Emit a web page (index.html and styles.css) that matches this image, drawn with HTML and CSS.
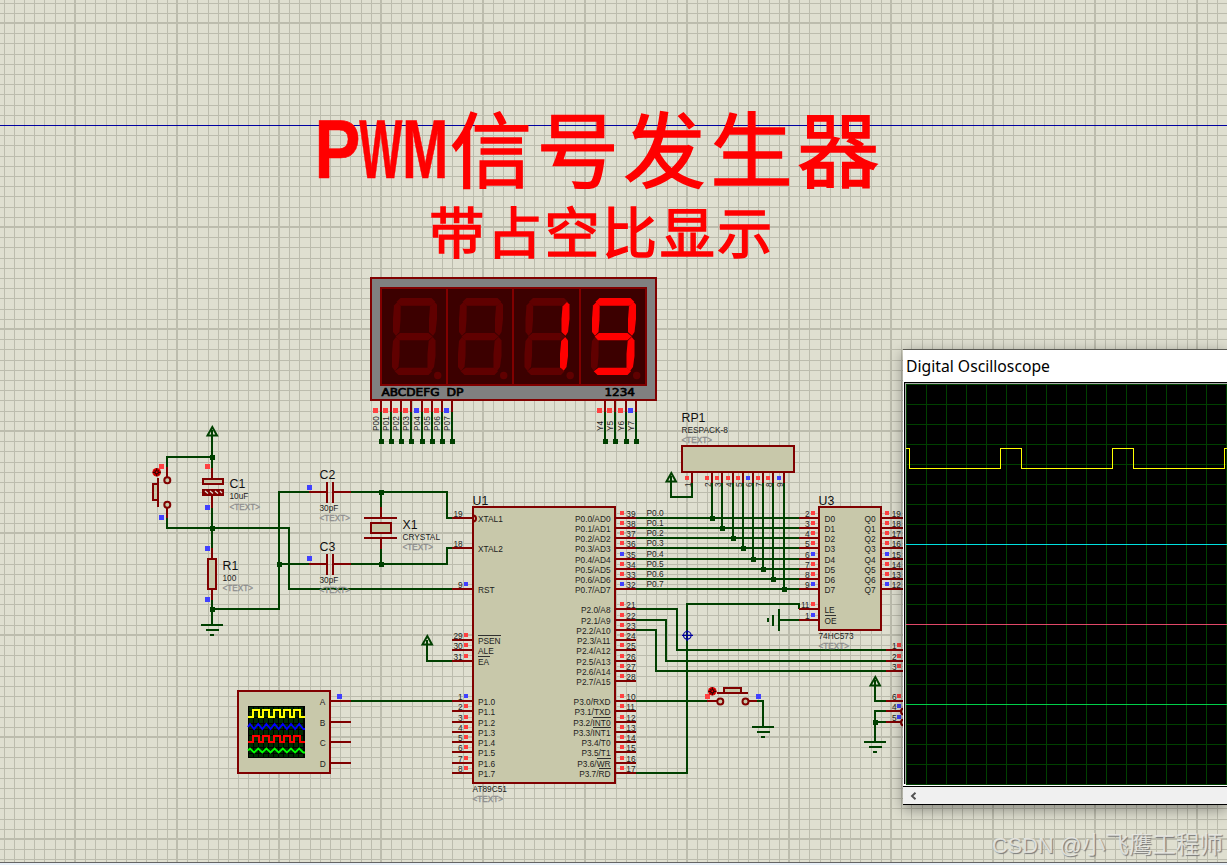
FILE: index.html
```html
<!DOCTYPE html>
<html lang="zh">
<head>
<meta charset="utf-8">
<title>PWM信号发生器</title>
<link rel="stylesheet" href="styles.css">
</head>
<body>
<main class="workspace">
  <svg class="schematic" id="schematic" width="1227" height="862" viewBox="0 0 1227 862"></svg>
  <section class="scope">
    <header class="scope-title"><span>Digital Oscilloscope</span></header>
    <div class="scope-body">
      <svg class="scope-screen" id="screen" width="321" height="401" viewBox="906 384 321 401"></svg>
    </div>
    <footer class="scope-scroll">
      <svg width="7" height="8" viewBox="0 0 7 8"><path d="M5.500 .8 2 4l3.500 3.200" fill="none" stroke="#505050" stroke-width="1.900"/></svg>
    </footer>
  </section>
  <p class="watermark">CSDN @<span>小飞鹰工程师</span></p>
</main>
<div class="status"></div>
<script src="schematic.js"></script>
</body>
</html>
```
FILE: styles.css
```css
html, body { margin: 0; height: 100%; overflow: hidden; }
body { display: flex; flex-direction: column; background: #dfdfd0; font-family: "Liberation Sans", sans-serif; }
.workspace { position: relative; flex: 1; min-height: 0; overflow: hidden; }
.schematic { display: block; }
.status { height: 2px; border-top: 1px solid #646464; background: #e8f0f8; }

.grid { fill: #bcbcad; }
.axis { fill: #0000a0; }
.wire { fill: none; stroke: #004000; stroke-width: 2; }
.pin { fill: none; stroke: #800000; stroke-width: 2; }
.part { fill: #c8c8aa; stroke: #800000; stroke-width: 2; }
.solid { fill: #800000; }
.dot { fill: #004000; }
.cell { fill: #002c00; }
.high { fill: #ff4040; }
.low { fill: #4040ff; }
.crisp { shape-rendering: crispEdges; }
.t { font-size: 8.300px; fill: #1c1c1c; }
.ref { font-size: 12.300px; fill: #101010; }
.hint { font-size: 8.200px; fill: #8e8e8e; stroke: #8e8e8e; stroke-width: .3; }
.over { stroke: #303030; stroke-width: 1; }
.case { fill: #808080; stroke: #800000; stroke-width: 2; }
.glass { fill: #3c0000; stroke: #800000; stroke-width: 2; }
.off { fill: #600000; }
.on { fill: #ff0000; }
.led-label { font: 9.800px "DejaVu Sans", sans-serif; fill: #000; stroke: #000; stroke-width: .6; }
.title { fill: #f00; stroke: #f00; font-family: "Noto Sans CJK SC", sans-serif; }
.title-main { font-size: 82px; stroke-width: 1.500; }
.title-sub { font-size: 55px; stroke-width: 1.500; }
.latin { font: bold 83px "Liberation Sans", sans-serif; fill: #f00; stroke: #f00; stroke-width: .6; }
.cross { fill: none; stroke: #0000a0; stroke-width: 1.200; }

.scope { position: absolute; left: 903px; top: 349px; width: 324px; height: 454px; display: flex; flex-direction: column; background: #fff; border-top: 1px solid #5c5c54; border-bottom: 1px solid #000; box-shadow: 0 4px 14px rgba(0,0,0,.42); }
.scope-title { height: 31px; padding: 0 0 1px 3px; flex: none; display: flex; align-items: center; font: 16px "Noto Sans", sans-serif; color: #000; white-space: nowrap; }
.scope-title span { display: block; transform: scaleX(.982); transform-origin: left; }
.scope-body { flex: none; height: 402px; margin-left: 1px; border-top: 1px solid #000; border-left: 1px solid #000; background: #a8a8a8; padding: 1px 0 0 1px; box-sizing: border-box; }
.scope-screen { display: block; background: #000; }
.scope-scroll { flex: 1; margin-top: 2px; border-top: 1px solid #000; display: flex; align-items: center; padding-left: 7px; background: #f0f0f0; }
.watermark { position: absolute; right: 4px; top: 829px; margin: 0; width: 231px; font: 21.800px/32px "Liberation Sans", "Noto Sans CJK SC", sans-serif; color: rgba(235,235,230,.85); text-shadow: 1px 1px 1px #777; white-space: nowrap; }
.watermark span { font-size: 23.500px; }
```
FILE: schematic.js
```js
const parts = [];
const add = s => parts.push(s);
const line = (cls, d) => add(`<path class="${cls} crisp" d="${d}"/>`);
const wire = d => line('wire', d);
const pin = d => line('pin', d);
const box = (cls, x, y, w, h) => add(`<rect class="${cls} crisp" x="${x}" y="${y}" width="${w}" height="${h}"/>`);
const text = (cls, x, y, s, extra = '') => add(`<text class="${cls}" x="${x}" y="${y}" ${extra}>${s}</text>`);
const dot = (x, y) => box('dot', x - 2, y - 2, 5, 5);
const level = (x, y, hi, w = 4) => box(hi ? 'high' : 'low', x, y, w, w);
const hint = (x, y) => text('hint', x, y, '&lt;TEXT&gt;');
const END = 'text-anchor="end"';

function grid() {
  for (let k = -28; k < 94; k++) {
    const x = Math.round(279 + 10.2 * k);
    k % 10 === 0 ? box('grid', x - 1, 0, 2, 862) : box('grid', x, 0, 1, 862);
  }
  for (let k = -12; k < 73; k++) {
    const y = Math.round(125 + 10.2 * k);
    if (k !== 0) k % 10 === 0 ? box('grid', 0, y - 1, 1227, 2) : box('grid', 0, y, 1227, 1);
  }
  box('axis', 0, 125, 1227, 1);
}

function power(x, y) {
  add(`<path d="M${x + .3} ${y + 1}L${x + 5} ${y + 9.5}H${x - 4.500}Z" fill="none" stroke="#004000" stroke-width="2"/>`);
}
function ground(x, y) {
  wire(`M${x - 11} ${y}h22M${x - 6} ${y + 5}h13M${x - 2} ${y + 10}h4`);
}
function ring(x, y) {
  add(`<circle cx="${x}" cy="${y}" r="3" class="part"/>`);
}
function actuator(x, y) {
  add(`<circle cx="${x}" cy="${y}" r="4.300" fill="#e00000"/><path d="M${x - 4} ${y}h8M${x} ${y - 4}v8M${x - 2} ${y - 2}l4 4M${x + 2} ${y - 2}l-4 4" stroke="#300" stroke-width="1.200"/><circle cx="${x}" cy="${y}" r="1" fill="#f00"/>`);
}

function titles() {
  add(`<g class="latin"><text transform="translate(314.400 178.300) scale(.83 1)">P</text><text transform="translate(359.300 178.300) scale(.55 1)">W</text><text transform="translate(402.200 178.300) scale(.665 1)">M</text></g>`);
  text('title title-main', '450 536.800 623.600 710.400 797.200', 181, '信号发生器');
  text('title title-sub', '429.300 486.900 544.500 602.100 659.700 717.300', 253, '带占空比显示');
}

function display() {
  box('case', 371, 278, 285, 122);
  box('glass', 381, 288, 265, 97);
  pin('M447 288V385M513 288V385M580 288V385');
  const seg = {
    a: '396.500,301.700 400.500,298 431.500,298 435.300,301.700 431,305.800 400.500,305.800',
    b: '434.500,302 437,304.500 437,319 435.500,332 433,335.800 429,332 429,319 430,306.500',
    c: '432.700,337 435.500,340.500 435.500,356 434,367 431,371 427.500,367.500 427.500,354 428.700,341',
    d: '394.700,371.300 399.500,367.700 428,367.700 432,371.300 428.500,375 398.500,375',
    e: '396,337 399.700,340.500 399.500,356 398.500,367 395,371 392,367 392,354 393,341',
    f: '397.500,302 400.700,306 400.500,320 399.500,332 396,335.800 393,332 393,319 394,305.500',
    g: '395.700,336.500 400,333 428.500,333 432.700,336.500 428.500,340.200 399,340.200'
  };
  [[0, ''], [66, ''], [132.5, 'bc'], [199, 'abcdfg']].forEach(([dx, lit]) => {
    for (const k in seg)
      add(`<polygon transform="translate(${dx} 0)" class="${lit.includes(k) ? 'on' : 'off'}" points="${seg[k]}"/>`);
    add(`<circle class="off" cx="${437.7 + dx}" cy="375.500" r="3.700"/>`);
  });
  text('led-label', 381.500, 396, 'ABCDEFG', 'textLength="58" lengthAdjust="spacingAndGlyphs"');
  text('led-label', 446.500, 396, 'DP', 'textLength="17" lengthAdjust="spacingAndGlyphs"');
  text('led-label', 604.500, 396, '1234', 'textLength="30.500" lengthAdjust="spacingAndGlyphs"');
  const leg = (x, name, hi) => {
    pin(`M${x} 401V412`); wire(`M${x} 412V441`); dot(x, 441);
    level(x - 8, 408, hi, 5);
    add(`<text class="t" transform="translate(${x - 2} 431) rotate(-90)">${name}</text>`);
  };
  [381, 391, 401, 411, 422, 432, 442, 452].forEach((x, i) => leg(x, 'P0' + i, i !== 4 && i !== 7));
  [605, 615, 626, 636].forEach((x, i) => leg(x, 'Y' + (i + 4), i < 3));
}

function resetCircuit() {
  power(212, 426);
  wire('M212 430V468M167 468V457H212M212 508V549M167 518V528H289V589H452M212 599V626M212 609H279V492H309M279 564H309');
  pin('M212 468V479M212 496V508M212 548V559M212 590V600M167 467V478M167 507V518');
  ring(167.300, 480.300); ring(167.300, 504.700);
  box('part', 153, 484, 5, 16); pin('M158 478V507');
  actuator(156.700, 472.300);
  box('part', 203, 479, 20, 5);
  box('solid', 202, 489, 22, 7);
  add('<path d="M205 491l3 2.500M210 491l3 2.500M215 491l3 2.500M220 491l2 2" stroke="#dfdfd0" stroke-width="1.300"/>');
  box('part', 208, 559, 8, 30);
  dot(212, 457); dot(212, 528); dot(212, 609);
  ground(212, 625);
  level(159, 464, 1, 5); level(159, 515, 0, 5); level(205, 464, 1, 5);
  level(205, 505, 0, 5); level(205, 546, 0, 5); level(205, 597, 0, 5);
  text('ref', 229.500, 487.700, 'C1'); text('t', 229.500, 499, '10uF'); hint(229.500, 510);
  text('ref', 222.500, 569.700, 'R1'); text('t', 222.500, 581, '100'); hint(222.500, 591);
}

function oscillator() {
  [[492, 'C2'], [564, 'C3']].forEach(([y, n]) => {
    pin(`M309 ${y}H327M333 ${y}H351M327 ${y - 10}v21M333 ${y - 10}v21`);
    level(307, n === 'C2' ? 485 : 556, 0, 5);
    text('ref', 319.500, y - 13.300, n); text('t', 319.500, y + 19.300, '30pF'); hint(319.500, y + 29);
  });
  wire('M351 492H447V518H452M351 564H447V548H452M381 492V507M381 549V564');
  pin('M452 518H473M452 548H473M452 589H473M381 507V518M364 518H397M364 538H397M381 538V549');
  box('part', 371, 523, 20, 10);
  dot(381, 492); dot(381, 564); dot(279, 564);
  text('ref', 402.500, 529, 'X1'); text('t', 402.500, 540.300, 'CRYSTAL'); hint(402.500, 550.300);
}

function mcu() {
  box('part', 473, 507, 142, 276);
  add('<path class="pin" d="M473 515.500a3 3 0 0 1 0 6"/>');
  text('ref', 472.500, 505, 'U1'); text('t', 472.500, 792.300, 'AT89C51'); hint(472.500, 802.300);
  const left = [[518, 19, 'XTAL1'], [548, 18, 'XTAL2'], [589, 9, 'RST', 0], [640, 29, 'PSEN', 1], [650, 30, 'ALE', 1], [661, 31, 'EA', 1]];
  [701, 711, 722, 732, 742, 752, 763, 773].forEach((y, i) => left.push([y, i + 1, 'P1.' + i, i ? 1 : 0]));
  left.forEach(([y, n, name, hi]) => {
    pin(`M452 ${y}H473`);
    text('t', 462.700, y - 1, n, END); text('t', 478, y + 4, name);
    if (hi !== undefined) level(464, y - 7, hi);
  });
  line('over', 'M478 635.500H501M478 656.500H490');
  const right = [];
  [518, 528, 538, 548, 559, 569, 579, 589].forEach((y, i) => {
    right.push([y, 39 - i, `P0.${i}/AD${i}`, i !== 4 && i !== 7]);
    wire(`M636 ${y}H799`); text('t', 646.500, y - 2, 'P0.' + i);
  });
  [609, 620, 630, 640, 650, 661, 671, 681].forEach((y, i) => right.push([y, 21 + i, `P2.${i}/A${8 + i}`, 1]));
  const alt = ['RXD', 'TXD', 'INT0', 'INT1', 'T0', 'T1', 'WR', 'RD'];
  [701, 711, 722, 732, 742, 752, 763, 773].forEach((y, i) => right.push([y, 10 + i, `P3.${i}/${alt[i]}`, 1]));
  right.forEach(([y, n, name, hi]) => {
    pin(`M615 ${y}H636`); level(620, y - 7, hi);
    text('t', 626.300, y - 1, n); text('t', 610.500, y + 4, name, END);
  });
  line('over', 'M593 717.500H611M593 727.500H611M597 758.500H611M599 768.500H611');
  power(427, 635); wire('M427 640V661H452');
  wire('M636 609H677V650H886M636 620H666V661H886M636 630H656V671H886M636 773H687V604H799V609');
  add('<g class="cross"><circle cx="687.300" cy="635.300" r="3.800"/><path d="M682 635.300h11M687.300 630v11"/></g>');
}

function respack() {
  box('part', 682, 446, 112, 26);
  text('ref', 681.500, 422, 'RP1'); text('t', 681.500, 433, 'RESPACK-8'); hint(681.500, 443);
  [692, 712, 722, 733, 743, 753, 763, 773, 784].forEach((x, i) => {
    pin(`M${x} 472V483`);
    level(x - 7, 476, i !== 5 && i !== 8);
    add(`<text class="t" transform="translate(${x - 1.500} 487) rotate(-90)">${i + 1}</text>`);
    if (i) {
      const y = [518, 528, 538, 548, 559, 569, 579, 589][i - 1];
      wire(`M${x} 483V${y}`); dot(x, y);
    }
  });
  wire('M692 483V497H671V476'); power(671, 472);
}

function latch() {
  box('part', 819, 507, 62, 123);
  text('ref', 818.500, 504.500, 'U3'); text('t', 818.500, 638.700, '74HC573'); hint(818.500, 648.700);
  [518, 528, 538, 548, 559, 569, 579, 589].forEach((y, i) => {
    const hi = i !== 4 && i !== 7;
    pin(`M799 ${y}H819M881 ${y}H903`);
    level(811, y - 7, hi); level(885, y - 7, hi);
    text('t', 809.500, y - 1, i + 2, END); text('t', 891.700, y - 1, 19 - i);
    text('t', 824.500, y + 4, 'D' + i); text('t', 875.500, y + 4, 'Q' + i, END);
  });
  pin('M799 609H819M799 620H819');
  text('t', 809.500, 608, '11', END); text('t', 809.500, 618.500, '1', END);
  level(811, 602, 1); level(811, 613, 0);
  text('t', 824.500, 613, 'LE'); text('t', 824.500, 624, 'OE');
  line('over', 'M825 615.500H836');
  wire('M799 620H779M779 609V631M773 615V626M768 618V622');
}

function outputs() {
  [[650, 1, 1], [661, 2, 1], [671, 3, 1], [701, 6, 1], [711, 4, 0], [722, 5, 0]].forEach(([y, n, hi]) => {
    pin(`M886 ${y}H903`); level(897, y - 7, hi); text('t', 896.500, y - 1, n, END);
  });
  wire('M875 680V701H886M886 711H875V742M875 722H886');
  power(875, 676); dot(875, 722); ground(875, 742);
  ring(904, 711.500); ring(904, 722.500);
}

function startButton() {
  wire('M636 701H707M757 701H763V727'); pin('M707 701H717M748 701H757M717 693H748');
  box('part', 724, 688, 17, 5);
  ring(720.300, 701.500); ring(745.500, 701.500);
  level(705, 694, 1, 5); level(756, 694, 0, 5);
  actuator(712.300, 691.300); ground(763, 727);
}

function probe() {
  box('part', 238, 691, 92, 82);
  box('', 248, 706, 57, 52);
  for (let x = 249; x < 304; x += 5) box('cell', x, 707, 4, 50);
  for (let y = 711; y < 757; y += 6) box('', 248, y, 57, 1);
  const up = [253, 263, 274, 284, 294];
  const square = (hi, lo, c) => {
    let d = `M248 ${lo}`;
    up.forEach(x => d += `H${x}V${hi}H${x + 5.500}V${lo}`);
    add(`<path d="${d}H305" class="crisp" fill="none" stroke="${c}" stroke-width="2"/>`);
  };
  const zig = (hi, lo, c) => {
    let d = `M248 ${lo - 2}`;
    for (let x = 250, k = 0; x < 304; x += 4.1, k++) d += `L${x} ${k % 2 ? lo : hi}`;
    add(`<path d="${d}L305 ${lo}" fill="none" stroke="${c}" stroke-width="1.800"/>`);
  };
  square(710, 717, '#ff0'); zig(724, 729, '#00f'); square(736, 742, '#f00'); zig(748.500, 752.500, '#0f0');
  [[701, 'A'], [722, 'B'], [742, 'C'], [763, 'D']].forEach(([y, n]) => {
    pin(`M330 ${y}H351`); text('t', 319.800, y + 4, n);
  });
  wire('M351 701H452'); level(337, 694, 0, 5);
}

[grid, titles, display, resetCircuit, oscillator, mcu, respack, latch, outputs, startButton, probe].forEach(draw => draw());
document.getElementById('schematic').innerHTML = parts.join('');

let lines = '';
for (let x = 906.5; x < 1227; x += 20) lines += `M${x} 384V785`;
for (let y = 384.5; y < 786; y += 20) lines += `M906 ${y}H1227`;
document.getElementById('screen').innerHTML =
  `<g fill="none" class="crisp"><path stroke="#004000" d="${lines}"/>` +
  '<path stroke="#ff0" d="M906 448.500H909.500V468.500H1000.500V448.500H1021.500V468.500H1112.500V448.500H1133.500V468.500H1224.500V448.500H1227"/>' +
  '<path stroke="#00e0e0" d="M906 544.500H1227"/><path stroke="#e04868" d="M906 624.500H1227"/><path stroke="#00d048" d="M906 704.500H1227"/></g>';
```
